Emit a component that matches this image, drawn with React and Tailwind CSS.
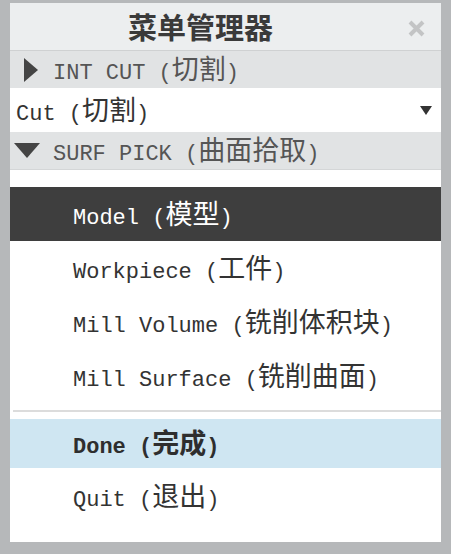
import React from "react";

const mono = { fontFamily: '"Liberation Mono", "Noto Sans CJK SC", monospace' };

function Label({ en, zh, bold }) {
  return (
    <span className={`whitespace-pre leading-none ${bold ? "font-bold" : ""}`}>
      <span className="text-[22px]" style={mono}>{en} (</span>
      <span className="text-[27px] font-[family-name:'Noto_Sans_CJK_SC',sans-serif]">{zh}</span>
      <span className="text-[22px]" style={mono}>)</span>
    </span>
  );
}

export default function App() {
  return (
    <div className="w-[451px] h-[554px] bg-[#b6b8ba] pl-[10px] pr-[10px] pt-[3px] pb-[12px] flex flex-col">
      <div className="flex-1 bg-white flex flex-col overflow-hidden">
        {/* Title */}
        <div className="relative h-[48px] shrink-0 bg-[#eceeef] border-b border-[#cfd1d2] flex items-center justify-center pr-[50px]">
          <span className="text-[29px] font-bold text-[#3a3a3a] leading-none font-[family-name:'Noto_Sans_CJK_SC',sans-serif]">
            菜单管理器
          </span>
          <svg className="absolute right-[16px] top-[17px]" width="17" height="17" viewBox="0 0 17 17">
            <path d="M2 2 L15 15 M15 2 L2 15" stroke="#c3c4c5" strokeWidth="4" strokeLinecap="butt" />
          </svg>
        </div>
        {/* INT CUT */}
        <div className="h-[37px] shrink-0 bg-[#e1e3e4] flex items-center text-[#555]">
          <svg className="ml-[14px] mr-[15px]" width="14" height="24" viewBox="0 0 14 24">
            <polygon points="0,0 14,12 0,24" fill="#444" />
          </svg>
          <Label en="INT CUT" zh="切割" />
        </div>
        {/* Cut dropdown */}
        <div className="h-[44px] shrink-0 bg-white flex items-center pl-[6px] pr-[9px] text-[#333]">
          <Label en="Cut" zh="切割" />
          <svg className="ml-auto" width="12" height="9" viewBox="0 0 12 9">
            <polygon points="0,0 12,0 6,9" fill="#333" />
          </svg>
        </div>
        {/* SURF PICK */}
        <div className="h-[38px] shrink-0 bg-[#e1e3e4] flex items-center text-[#555] border-b border-[#d4d6d7]">
          <svg className="ml-[4px] mr-[13px]" width="26" height="15" viewBox="0 0 26 15">
            <polygon points="0,0 26,0 13,15" fill="#444" />
          </svg>
          <Label en="SURF PICK" zh="曲面拾取" />
        </div>
        <div className="h-[17px] shrink-0 bg-white" />
        {/* Items */}
        <div className="h-[54px] shrink-0 bg-[#3e3e3e] text-white flex items-center pl-[63px]">
          <Label en="Model" zh="模型" />
        </div>
        <div className="h-[54px] shrink-0 flex items-center pl-[63px] text-[#333]">
          <Label en="Workpiece" zh="工件" />
        </div>
        <div className="h-[54px] shrink-0 flex items-center pl-[63px] text-[#333]">
          <Label en="Mill Volume" zh="铣削体积块" />
        </div>
        <div className="h-[54px] shrink-0 flex items-center pl-[63px] text-[#333]">
          <Label en="Mill Surface" zh="铣削曲面" />
        </div>
        <div className="h-[7px] shrink-0" />
        <div className="h-[2px] shrink-0 ml-[3px] bg-[#dcdcdc]" />
        <div className="h-[7px] shrink-0" />
        <div className="h-[49px] shrink-0 bg-[#cfe6f2] flex items-center pl-[63px] text-[#2e2e2e]">
          <Label en="Done" zh="完成" bold />
        </div>
        <div className="h-[56px] shrink-0 flex items-center pl-[63px] text-[#333]">
          <Label en="Quit" zh="退出" />
        </div>
      </div>
    </div>
  );
}
